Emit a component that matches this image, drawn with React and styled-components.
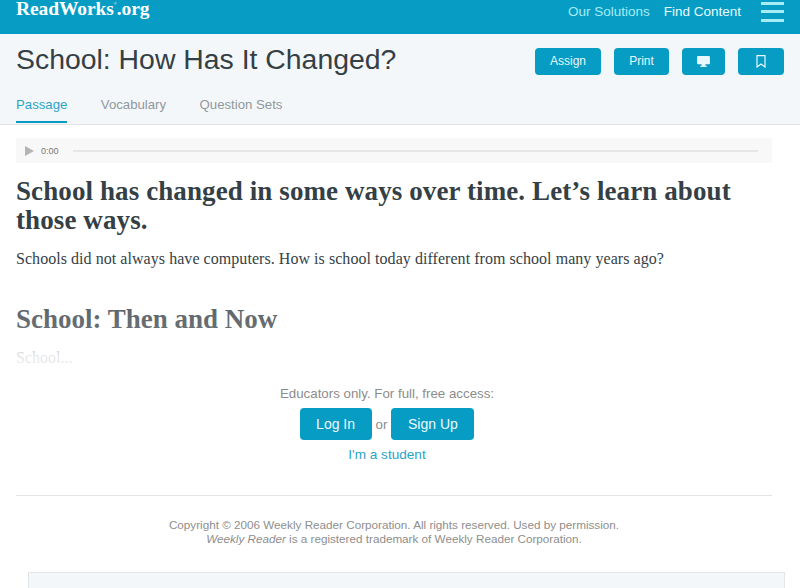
import React from "react";
import styled, { createGlobalStyle } from "styled-components";

const Global = createGlobalStyle`
  html, body { margin: 0; padding: 0; background: #fff; overflow: hidden; }
  body { font-family: "Liberation Sans", Arial, sans-serif; }
`;

const Page = styled.div`
  width: 800px;
  height: 588px;
  overflow: hidden;
`;

const TopBar = styled.header`
  height: 34px;
  background: #069cc4;
  display: flex;
  align-items: flex-start;
  padding: 0 16px;
`;

const Logo = styled.div`
  font-family: "Liberation Serif", serif;
  font-weight: 700;
  font-size: 19.5px;
  line-height: 18px;
  letter-spacing: -0.1px;
  color: #fff;
  sup {
    font-size: 4px;
    font-weight: 400;
    vertical-align: 10px;
    line-height: 0;
    letter-spacing: 0;
  }
`;

const TopNav = styled.nav`
  margin-left: auto;
  display: flex;
  align-items: center;
  height: 22px;
  font-size: 13.5px;
`;

const NavLink = styled.a`
  color: ${(p) => (p.$active ? "#e6fbff" : "#a5ecf7")};
  margin-right: ${(p) => p.$gap}px;
`;

const Burger = styled.div`
  width: 23px;
  height: 20px;
  margin-top: 1px;
  display: flex;
  flex-direction: column;
  justify-content: space-between;
  span {
    height: 3px;
    background: #a5ecf7;
  }
`;

const SubHeader = styled.div`
  height: 90px;
  background: #f4f7f9;
  border-bottom: 1px solid #dfe3e5;
  padding: 0 16px;
  box-sizing: content-box;
`;

const TitleRow = styled.div`
  display: flex;
  align-items: flex-start;
  height: 56px;
`;

const Title = styled.h1`
  margin: 6px 0 0;
  font-weight: 400;
  font-size: 28.4px;
  line-height: 38px;
  color: #353f46;
`;

const Actions = styled.div`
  margin-left: auto;
  margin-right: 0;
  padding-top: 14px;
  display: flex;
  gap: 13px;
`;

const ActionButton = styled.button`
  width: ${(p) => p.$w}px;
  height: 27px;
  border: 0;
  border-radius: 4px;
  background: #069cc4;
  color: #e8f8fc;
  font: 12px "Liberation Sans", Arial, sans-serif;
  padding: 0 0 1px;
  display: flex;
  align-items: center;
  justify-content: center;
`;

const Tabs = styled.div`
  display: flex;
  gap: 33.5px;
`;

const Tab = styled.a`
  height: 31px;
  line-height: 30px;
  font-size: 13.2px;
  color: ${(p) => (p.$active ? "#2ba3c6" : "#90979c")};
  border-bottom: ${(p) => (p.$active ? "2px solid #069cc4" : "none")};
  box-sizing: content-box;
`;

const Content = styled.main`
  padding: 13px 0 0 16px;
`;

const Player = styled.div`
  height: 25px;
  width: 756px;
  background: #f8f8f8;
  display: flex;
  align-items: center;
  padding: 0 14px 0 8px;
  box-sizing: border-box;
`;

const PlayIcon = styled.span`
  width: 0;
  height: 0;
  border-left: 9px solid #b4b4b4;
  border-top: 5px solid transparent;
  border-bottom: 5px solid transparent;
  margin-left: 1px;
`;

const Time = styled.span`
  font-size: 9px;
  color: #777;
  margin: 0 14px 0 7px;
`;

const Track = styled.div`
  flex: 1;
  height: 2px;
  background: #e6e6e6;
`;

const Excerpt = styled.div`
  position: relative;
  width: 756px;
  height: 203px;
  overflow: hidden;
  font-family: "Liberation Serif", serif;
`;

const Lead = styled.h2`
  margin: 14px 0 0;
  font-size: 27px;
  line-height: 29px;
  letter-spacing: 0.1px;
  font-weight: 700;
  color: #353f46;
`;

const Intro = styled.p`
  margin: 14px 0 0;
  font-size: 16px;
  line-height: 20px;
  letter-spacing: 0.05px;
  color: #353f46;
`;

const SectionTitle = styled.h3`
  margin: 35px 0 0;
  font-size: 27px;
  line-height: 30px;
  font-weight: 700;
  color: #353f46;
`;

const Body = styled.p`
  margin: 14px 0 0;
  font-size: 16px;
  line-height: 20px;
  color: #353f46;
`;

const Fade = styled.div`
  position: absolute;
  left: 0;
  right: 0;
  bottom: 0;
  height: 66px;
  background: linear-gradient(rgba(255, 255, 255, 0.18), rgba(255, 255, 255, 0.26) 45%, rgba(255, 255, 255, 0.88) 85%);
`;

const Gate = styled.div`
  width: 742px;
  margin-top: 20px;
  text-align: center;
  font-size: 13.3px;
  color: #8c8c8c;
`;

const GateButtons = styled.div`
  display: flex;
  justify-content: center;
  align-items: center;
  gap: 4px;
  margin-top: 7px;
  margin-bottom: 7px;
`;

const GateButton = styled.button`
  width: ${(p) => p.$w}px;
  height: 32px;
  border: 0;
  border-radius: 4px;
  background: #069cc4;
  color: #eefafd;
  font: 14px "Liberation Sans", Arial, sans-serif;
`;

const StudentLink = styled.a`
  color: #2ba3c6;
  font-size: 13.6px;
`;

const Rule = styled.hr`
  width: 756px;
  margin: 33px 0 0;
  border: 0;
  border-top: 1px solid #e3e3e3;
`;

const Copyright = styled.p`
  width: 756px;
  margin: 22px 0 0;
  text-align: center;
  font-size: 11.7px;
  line-height: 14px;
  color: #8e8e8e;
`;

const BottomCard = styled.div`
  width: 755px;
  height: 40px;
  margin: 26px 0 0 12px;
  background: #f4f7f9;
  border: 1px solid #e3e6e7;
`;

export default function App() {
  return (
    <Page>
      <Global />
      <TopBar>
        <Logo>ReadWorks<sup>®</sup>.org</Logo>
        <TopNav>
          <NavLink $gap={14}>Our Solutions</NavLink>
          <NavLink $active $gap={20}>Find Content</NavLink>
          <Burger><span /><span /><span /></Burger>
        </TopNav>
      </TopBar>
      <SubHeader>
        <TitleRow>
          <Title>School: How Has It Changed?</Title>
          <Actions>
            <ActionButton $w={66}>Assign</ActionButton>
            <ActionButton $w={55}>Print</ActionButton>
            <ActionButton $w={43}>
              <svg width="13" height="11" viewBox="0 0 14 12" fill="#e8f8fc">
                <path d="M1 0h12a1 1 0 0 1 1 1v7a1 1 0 0 1-1 1H9v1.5h1.5V12h-7v-1.5H5V9H1a1 1 0 0 1-1-1V1a1 1 0 0 1 1-1z" />
              </svg>
            </ActionButton>
            <ActionButton $w={46}>
              <svg width="10" height="13" viewBox="0 0 10 13" fill="none" stroke="#e8f8fc" strokeWidth="1.2">
                <path d="M1 .6h8v11.4L5 9 1 12z" />
              </svg>
            </ActionButton>
          </Actions>
        </TitleRow>
        <Tabs>
          <Tab $active>Passage</Tab>
          <Tab>Vocabulary</Tab>
          <Tab>Question Sets</Tab>
        </Tabs>
      </SubHeader>
      <Content>
        <Player>
          <PlayIcon />
          <Time>0:00</Time>
          <Track />
        </Player>
        <Excerpt>
          <Lead>School has changed in some ways over time. Let’s learn about those ways.</Lead>
          <Intro>Schools did not always have computers. How is school today different from school many years ago?</Intro>
          <SectionTitle>School: Then and Now</SectionTitle>
          <Body>School...</Body>
          <Fade />
        </Excerpt>
        <Gate>
          Educators only. For full, free access:
          <GateButtons>
            <GateButton $w={72}>Log In</GateButton>
            or
            <GateButton $w={83}>Sign Up</GateButton>
          </GateButtons>
          <StudentLink>I'm a student</StudentLink>
        </Gate>
        <Rule />
        <Copyright>
          Copyright © 2006 Weekly Reader Corporation. All rights reserved. Used by permission.<br />
          <em>Weekly Reader</em> is a registered trademark of Weekly Reader Corporation.
        </Copyright>
        <BottomCard />
      </Content>
    </Page>
  );
}
